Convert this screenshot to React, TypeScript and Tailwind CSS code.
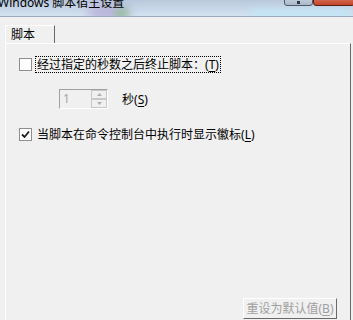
import React from 'react';

const ui = { fontFamily: '"Noto Sans", "Noto Sans CJK SC", sans-serif' };

const Mn: React.FC<{ k: string }> = ({ k }) => (
  <span>
    (<span className="underline underline-offset-2">{k}</span>)
  </span>
);

const CheckBox: React.FC<{ checked?: boolean }> = ({ checked }) => (
  <div className="w-[13px] h-[13px] shrink-0 border border-[#8e8f8f] bg-white flex items-center justify-center">
    {checked && (
      <svg width="9" height="9" viewBox="0 0 9 9">
        <path d="M1 4.5 L3.5 7 L8 1.5" stroke="#1a1a1a" strokeWidth="1.8" fill="none" />
      </svg>
    )}
  </div>
);

const SpinBox: React.FC = () => (
  <div className="w-[49px] h-[20px] flex border border-t-[#a0a0a0] border-l-[#a0a0a0] border-r-white border-b-white bg-[#f0f0f0]">
    <div className="flex-1 pl-[3px] text-[12px] leading-[18px] text-[#a6a6a6]">1</div>
    <div className="w-[16px] flex flex-col">
      <div className="flex-1 border border-[#c8c8c8] bg-[#f0f0f0] flex items-center justify-center">
        <svg width="5" height="3" viewBox="0 0 5 3"><path d="M0 3 L2.5 0 L5 3 Z" fill="#b0b0b0" /></svg>
      </div>
      <div className="flex-1 border border-[#c8c8c8] bg-[#f0f0f0] flex items-center justify-center">
        <svg width="5" height="3" viewBox="0 0 5 3"><path d="M0 0 L2.5 3 L5 0 Z" fill="#b0b0b0" /></svg>
      </div>
    </div>
  </div>
);

const App: React.FC = () => {
  return (
    <div className="w-[353px] h-[320px] overflow-hidden flex flex-col bg-[#f0f0f0] text-black" style={ui}>
      {/* Title bar (glass) */}
      <div className="relative h-[17px] shrink-0 overflow-hidden border-b border-[#9aa9bb] bg-[linear-gradient(180deg,#b9c9dc_0%,#c9d8e9_60%,#d4e2f0_100%)]">
        <div className="absolute left-[88px] top-[6px] w-[40px] h-[14px] rounded-full bg-[#a78fc9] opacity-60 blur-[6px]" />
        <div className="absolute left-[115px] top-[8px] w-[14px] h-[12px] rounded-full bg-[#7fc07a] opacity-70 blur-[4px]" />
        <div className="absolute left-[250px] top-[9px] w-[100px] h-[10px] bg-[#bfe6f8] opacity-80 blur-[3px]" />
        <div className="absolute left-[-2px] top-[-5px] text-[12px] leading-[16px] whitespace-nowrap">Windows 脚本宿主设置</div>
        <div className="absolute left-[284px] top-[-4px] w-[29px] h-[10px] rounded-b-[3px] border border-[#4e5b6b] bg-[linear-gradient(180deg,#c9d3de,#aab8c8)] flex items-end justify-center">
          <div className="w-[3px] h-[3px] mb-[1px] bg-[#2c3a4a]" />
        </div>
        <div className="absolute left-[313px] top-[-4px] w-[42px] h-[10px] rounded-b-[3px] border border-[#5b1f18] bg-[linear-gradient(180deg,#d9785f,#c2442b)]" />
      </div>

      {/* Tab strip */}
      <div className="pl-[5px] pt-[8px]">
        <div className="w-[50px] h-[18px] border-t border-l border-white border-r border-r-[#696969] text-[12px] leading-[16px] pl-[5px] pt-[1px]">
          脚本
        </div>
      </div>

      {/* Tab panel */}
      <div className="ml-[5px] w-[346px] flex-1 border-t border-l border-white border-r border-r-[#696969] text-[12px]">
        <div className="pl-[13px] pt-[12px] flex items-center h-[29px]">
          <CheckBox />
          <div className="ml-[3px] h-[17px] px-[1px] border border-dotted border-black flex items-center leading-[15px]">
            经过指定的秒数之后终止脚本：<Mn k="T" />
          </div>
        </div>

        <div className="mt-[16px] ml-[53px] flex items-center">
          <SpinBox />
          <div className="ml-[14px] leading-[15px] mt-[1px]">
            秒<Mn k="S" />
          </div>
        </div>

        <div className="mt-[17px] pl-[13px] flex items-center h-[17px]">
          <CheckBox checked />
          <div className="ml-[4px] leading-[15px] px-[1px]">
            当脚本在命令控制台中执行时显示徽标<Mn k="L" />
          </div>
        </div>

        <div className="mt-[155px] flex justify-end pr-[13px]">
          <div className="w-[94px] h-[21px] border border-t-white border-l-white border-r-[#696969] border-b-[#696969] bg-[#f0f0f0] text-[#a0a0a0] flex items-center justify-center leading-[15px]">
            重设为默认值<Mn k="B" />
          </div>
        </div>
      </div>
    </div>
  );
};

export default App;
